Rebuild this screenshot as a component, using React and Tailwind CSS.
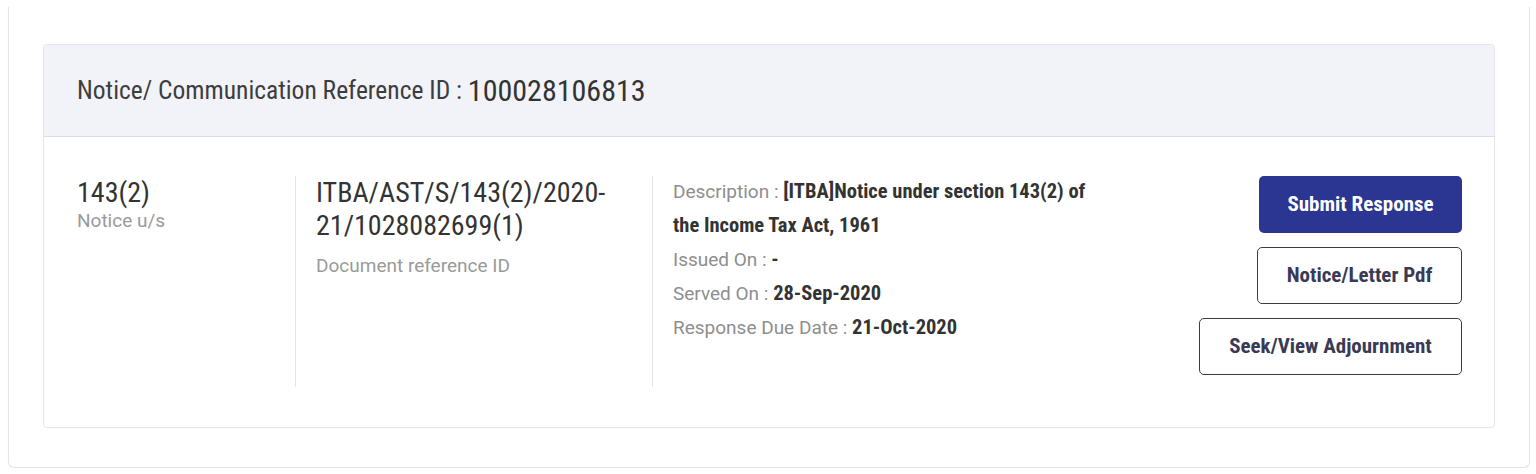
export default function App() {
  const font = { fontFamily: "'Roboto Condensed', Roboto, 'Liberation Sans', sans-serif" };
  const plain = { fontFamily: "Roboto, 'Liberation Sans', sans-serif" };
  const val = "font-bold text-[#333333] text-[20.5px] leading-[20px]";
  return (
    <div className="w-[1536px] h-[474px] bg-white overflow-hidden" style={font}>
      <div className="ml-[8px] mt-[7px] w-[1522px] h-[461px] border-l border-r border-b border-[#e2e2ee] rounded-b-[6px] pl-[34px] pr-[34px] pt-[37px]">
        <div className="border border-[#e4e5ee] rounded-[4px] h-[384px] flex flex-col">
          <div className="h-[92px] bg-[#f2f3f8] border-b border-[#dcdde8] flex items-center pl-[33px] rounded-t-[4px]">
            <span className="text-[25.5px] text-[#3d3d3d] leading-none">Notice/ Communication Reference ID :&nbsp;</span>
            <span className="text-[30px] text-[#333333] leading-none">100028106813</span>
          </div>
          <div className="flex pt-[39px] pl-[33px] pr-[32px]">
            <div className="w-[218px] h-[211px] flex flex-col">
              <div className="text-[28px] leading-[33px] text-[#333333]">143(2)</div>
              <div className="text-[19px] leading-[24px] text-[#9a9a9a]" style={plain}>Notice u/s</div>
            </div>
            <div className="w-[357px] h-[211px] border-l border-[#e3e3ea] pl-[20px] flex flex-col">
              <div className="text-[28px] leading-[33px] text-[#333333]">ITBA/AST/S/143(2)/2020-<br />21/1028082699(1)</div>
              <div className="text-[19px] leading-[28px] mt-[10px] text-[#9a9a9a]" style={plain}>Document reference ID</div>
            </div>
            <div className="flex-1 h-[211px] border-l border-[#e3e3ea] pl-[20px] flex">
              <div className="text-[19px] leading-[34px] text-[#8e8e8e] -mt-[1px]" style={plain}>
                <div>Description : <span className={val} style={font}>[ITBA]Notice under section 143(2) of<br />the Income Tax Act, 1961</span></div>
                <div>Issued On : <span className={val} style={font}>-</span></div>
                <div>Served On : <span className={val} style={font}>28-Sep-2020</span></div>
                <div>Response Due Date : <span className={val} style={font}>21-Oct-2020</span></div>
              </div>
              <div className="flex-1 flex flex-col items-end gap-[14px]">
                <button className="h-[57px] w-[203px] rounded-[5px] bg-[#2b3592] text-white text-[21px] font-bold">Submit Response</button>
                <button className="h-[57px] w-[205px] rounded-[5px] border-[1.5px] border-[#3b3b4a] bg-white text-[#3a3a55] text-[21px] font-bold">Notice/Letter Pdf</button>
                <button className="h-[57px] w-[263px] rounded-[5px] border-[1.5px] border-[#3b3b4a] bg-white text-[#3a3a55] text-[21px] font-bold">Seek/View Adjournment</button>
              </div>
            </div>
          </div>
        </div>
      </div>
    </div>
  );
}
